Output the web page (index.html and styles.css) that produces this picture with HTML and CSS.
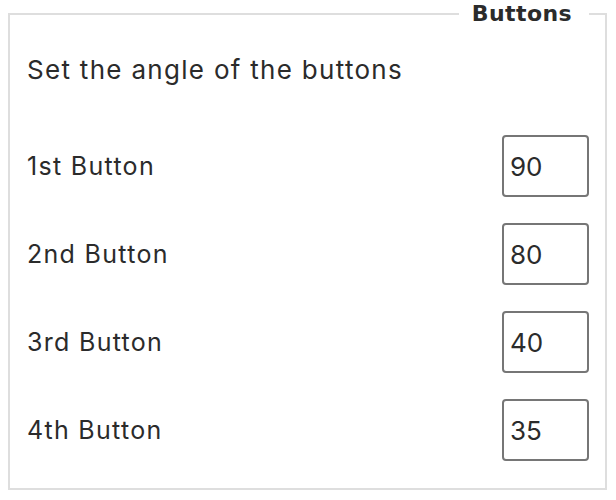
FILE: index.html
```html
<!DOCTYPE html>
<html lang="en">
<head>
<meta charset="utf-8">
<title>Buttons</title>
<link rel="stylesheet" href="styles.css">
</head>
<body>
<fieldset class="panel">
  <legend class="panel-title">Buttons</legend>
  <p class="intro">Set the angle of the buttons</p>
  <div class="rows">
    <label class="row"><span class="row-label">1st Button</span><input class="angle" type="text" value="90"></label>
    <label class="row"><span class="row-label">2nd Button</span><input class="angle" type="text" value="80"></label>
    <label class="row"><span class="row-label">3rd Button</span><input class="angle" type="text" value="40"></label>
    <label class="row"><span class="row-label">4th Button</span><input class="angle" type="text" value="35"></label>
  </div>
</fieldset>
</body>
</html>
```
FILE: styles.css
```css
html, body {
  margin: 0;
  padding: 0;
  background: #ffffff;
}
body {
  padding: 0 9px 0 8px;
  font-family: "Inter", "Noto Sans", sans-serif;
  color: #2b2b2b;
}
.panel {
  margin: 0;
  border: 2px solid #dedede;
  padding: 0 16px 27px 17px;
  min-width: 0;
}
.panel-title {
  margin-left: auto;
  padding: 0 17px 0 13px;
  font-family: "DejaVu Sans", "Inter", sans-serif;
  font-size: 22px;
  font-weight: 700;
  letter-spacing: 0.4px;
  line-height: 28px;
  color: #2b2b2b;
}
.intro {
  margin: 27px 0 0;
  font-size: 26px;
  letter-spacing: 1.3px;
  line-height: 30px;
}
.rows {
  display: flex;
  flex-direction: column;
  gap: 26px;
  margin-top: 50px;
}
.row {
  display: flex;
  align-items: center;
  justify-content: space-between;
}
.row-label {
  font-size: 25px;
  letter-spacing: 1.3px;
}
.angle {
  box-sizing: border-box;
  width: 87px;
  height: 62px;
  border: 2px solid #767676;
  border-radius: 4px;
  padding: 0 6px;
  font-family: inherit;
  font-size: 26px;
  color: #2b2b2b;
  background: #fff;
}
```
